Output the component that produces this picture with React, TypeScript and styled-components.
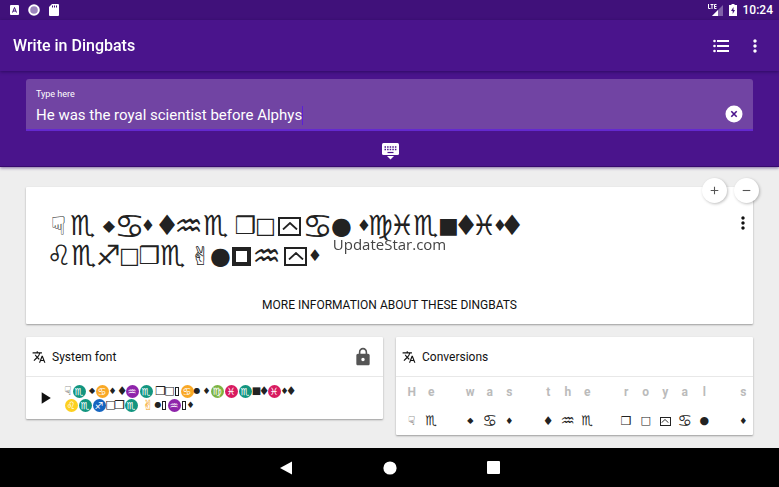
import React, { useState } from 'react';
import styled, { createGlobalStyle } from 'styled-components';
import {
  MdAdd,
  MdLock,
  MdMoreVert,
  MdPlayArrow,
  MdRemove,
  MdTranslate,
} from 'react-icons/md';

const GlobalStyle = createGlobalStyle`
  * { box-sizing: border-box; }
  body { margin: 0; background: #eeeeee; font-family: Roboto, sans-serif; color: #111; }
  button { border: 0; padding: 0; background: none; color: inherit; font: inherit; cursor: pointer; }
`;

const Screen = styled.div`
  display: flex;
  flex-direction: column;
  min-height: 100vh;
`;

const StatusBar = styled.div`
  display: flex;
  align-items: center;
  justify-content: space-between;
  height: 20px;
  padding: 0 6px 0 9px;
  background: #40117a;
  color: #fff;
`;

const StatusGroup = styled.div<{ $gap: number }>`
  display: flex;
  align-items: center;
  gap: ${(p) => p.$gap}px;
  font-size: 12px;
  font-weight: 500;
`;

const AppBar = styled.header`
  position: relative;
  z-index: 1;
  display: flex;
  align-items: center;
  justify-content: space-between;
  height: 51px;
  padding: 0 12px 0 13px;
  background: #4a148c;
  color: #fff;
  box-shadow: 0 1px 3px rgba(20, 0, 60, 0.5);
`;

const Title = styled.h1`
  margin: 0;
  font-size: 16px;
  font-weight: 500;
`;

const Actions = styled.div`
  display: flex;
  align-items: center;
  gap: 10px;
`;

const IconButton = styled.button`
  display: flex;
  align-items: center;
  justify-content: center;
  min-width: 24px;
  height: 24px;
`;

const Compose = styled.section`
  position: relative;
  height: 96px;
  padding: 8px 26px 0;
  background: #4a148c;
  border-bottom: 1px solid #37096e;
  box-shadow: 0 1px 3px rgba(60, 20, 110, 0.6);
`;

const Field = styled.div`
  display: flex;
  justify-content: space-between;
  height: 52px;
  padding: 9px 10px 0;
  border-bottom: 2px solid #6429cf;
  border-radius: 3px 3px 0 0;
  background: #7144a3;
  color: #fff;
`;

const FieldLabel = styled.label`
  display: block;
  font-size: 9px;
  line-height: 13px;
`;

const Entry = styled.div`
  display: flex;
  align-items: center;
  height: 28px;
`;

const TextInput = styled.input`
  field-sizing: content;
  padding: 0;
  border: 0;
  outline: 0;
  background: transparent;
  color: #fff;
  font: 400 15px/20px Roboto, sans-serif;
`;

const Caret = styled.span`
  width: 1px;
  height: 19px;
  background: #5b20d6;
`;

const ClearButton = styled(IconButton)`
  min-width: 18px;
  margin-top: 14px;
`;

const KeyboardRow = styled.div`
  display: flex;
  justify-content: center;
  padding-top: 8px;
  color: #fff;
`;

const Content = styled.main`
  flex: 1;
  padding: 20px 26px 12px;
`;

const Card = styled.section`
  position: relative;
  background: #fff;
  border-radius: 1px;
  box-shadow: 0 1px 2px rgba(0, 0, 0, 0.35);
`;

const MainCard = styled(Card)`
  display: flex;
  flex-direction: column;
  height: 137px;
  padding: 24px 21px 9px;
`;

const SizeButtons = styled.div`
  position: absolute;
  top: -9px;
  right: -6px;
  display: flex;
  gap: 7px;
`;

const RoundButton = styled.button`
  display: flex;
  align-items: center;
  justify-content: center;
  width: 25px;
  height: 25px;
  border-radius: 50%;
  background: #fff;
  color: #555;
  box-shadow: 1px 1px 3px rgba(0, 0, 0, 0.25);
`;

const CardMenu = styled(IconButton)`
  position: absolute;
  top: 24px;
  right: -2px;
`;

const GlyphLine = styled.div<{ $height: number }>`
  display: flex;
  align-items: center;
  height: ${(p) => p.$height}px;
`;

const Glyph = styled.span<{ $width: number; $size: number }>`
  display: flex;
  align-items: center;
  justify-content: center;
  flex: none;
  width: ${(p) => p.$width}px;
  height: 30px;
  font-family: 'DejaVu Sans', sans-serif;
  font-size: ${(p) => p.$size}px;
  line-height: 30px;
  color: #222;
  white-space: pre;
`;

const Quad = styled.span<{ $width: number; $height: number; $border: number }>`
  display: flex;
  align-items: center;
  justify-content: center;
  width: ${(p) => p.$width}px;
  height: ${(p) => p.$height}px;
  border: ${(p) => p.$border}px solid #222;
`;

const MoreInfo = styled.button`
  align-self: center;
  margin-top: auto;
  font-size: 12px;
  font-weight: 400;
  line-height: 20px;
`;

const Columns = styled.div`
  display: grid;
  grid-template-columns: 1fr 1fr;
  align-items: start;
  gap: 13px;
  margin-top: 13px;
`;

const CardHeader = styled.div`
  display: flex;
  align-items: center;
  gap: 6px;
  height: 40px;
  padding: 0 10px 0 6px;
  border-bottom: 1px solid #e8e8e8;
`;

const CardTitle = styled.h2`
  flex: 1;
  margin: 0;
  font-size: 12px;
  font-weight: 400;
`;

const LockIcon = styled(MdLock)`
  color: #555;
`;

const Preview = styled.div`
  display: flex;
  align-items: center;
  gap: 7px;
  height: 42px;
  padding-left: 7px;
`;

const SmallGlyph = styled.span<{ $width: number; $size: number; $color?: string }>`
  display: flex;
  align-items: center;
  justify-content: center;
  flex: none;
  width: ${(p) => p.$width}px;
  height: 14px;
  font-family: 'DejaVu Sans', sans-serif;
  font-size: ${(p) => p.$size}px;
  font-weight: ${(p) => (p.$color ? 700 : 400)};
  line-height: 14px;
  color: ${(p) => p.$color || '#222'};
  white-space: pre;
`;

const Sign = styled.span<{ $color: string }>`
  display: flex;
  align-items: center;
  justify-content: center;
  width: 13px;
  height: 13px;
  border-radius: 50%;
  background: ${(p) => p.$color};
  color: #fff;
  font-size: 10px;
  line-height: 13px;
`;

const ConversionTable = styled.table`
  width: 100%;
  padding-left: 6px;
  table-layout: fixed;
  border-spacing: 0;
  text-align: center;

  th, td { height: 28px; padding: 0; vertical-align: middle; }
  th { height: 30px; color: #bbb; font-size: 12px; font-weight: 700; }
  td > span { width: auto; }
`;

const NavBar = styled.nav`
  display: flex;
  align-items: center;
  justify-content: center;
  gap: 80px;
  height: 39px;
  background: #000;
  color: #fff;
`;

const Watermark = styled.div`
  position: fixed;
  inset: 0;
  display: flex;
  align-items: center;
  justify-content: center;
  pointer-events: none;
  font-family: 'Open Sans', sans-serif;
  font-size: 15px;
  color: #444;
`;

type Spec = { char: string; width: number; size: number; small: number; mini: number; sign?: string };

const GLYPHS: Record<string, Spec> = {
  ' ': { char: ' ', width: 7, size: 24, small: 3, mini: 9 },
  H: { char: '☟', width: 23, size: 26, small: 8, mini: 12 },
  A: { char: '✌', width: 18, size: 26, small: 14, mini: 14 },
  e: { char: '♏', width: 25, size: 28, small: 14, mini: 13, sign: '#12957f' },
  a: { char: '♋', width: 27, size: 34, small: 14, mini: 16, sign: '#f9a825' },
  h: { char: '♒', width: 29, size: 32, small: 14, mini: 16, sign: '#8e24aa' },
  c: { char: '♍', width: 22, size: 28, small: 14, mini: 13, sign: '#7cb342' },
  i: { char: '♓', width: 22, size: 28, small: 14, mini: 13, sign: '#d81b60' },
  b: { char: '♌', width: 24, size: 28, small: 14, mini: 13, sign: '#fdd020' },
  f: { char: '♐', width: 24, size: 28, small: 14, mini: 13, sign: '#1565c0' },
  w: { char: '◆', width: 14, size: 16, small: 6, mini: 8 },
  s: { char: '♦', width: 10, size: 16, small: 7, mini: 9 },
  t: { char: '♦', width: 14, size: 28, small: 6, mini: 12 },
  r: { char: '❒', width: 21, size: 24, small: 9, mini: 12 },
  o: { char: '□', width: 19, size: 22, small: 9, mini: 11 },
  n: { char: '■', width: 21, size: 22, small: 9, mini: 10 },
  l: { char: '●', width: 21, size: 24, small: 6, mini: 11 },
  y: { char: '', width: 29, size: 24, small: 6, mini: 11 },
  p: { char: '', width: 21, size: 24, small: 6, mini: 11 },
};

const Chevron = ({ width }: { width: number }) => (
  <svg width={width} height={width / 2} viewBox="0 0 16 8" fill="none" stroke="#222" strokeWidth="1.8">
    <path d="M1 7.500 8 1l7 6.500" />
  </svg>
);

function LargeText({ text }: { text: string }) {
  return (
    <GlyphLine $height={30}>
      {[...text].map((letter, i) => {
        const g = GLYPHS[letter];
        return (
          <Glyph key={i} $width={g.width} $size={g.size}>
            {letter === 'y' && <Quad $width={23} $height={19} $border={2}><Chevron width={16} /></Quad>}
            {letter === 'p' && <Quad $width={19} $height={19} $border={4} />}
            {letter !== 'y' && letter !== 'p' && g.char + (g.sign ? '\uFE0E' : '')}
          </Glyph>
        );
      })}
    </GlyphLine>
  );
}

function SystemText({ text }: { text: string }) {
  return (
    <GlyphLine $height={14}>
      {[...text].map((letter, i) => {
        const g = GLYPHS[letter];
        const missing = letter === 'y' || letter === 'p';
        const size = letter === 'l' ? 8 : g.mini;
        return (
          <SmallGlyph key={i} $width={g.small} $size={size} $color={letter === 'A' ? '#f59e0b' : undefined}>
            {g.sign && <Sign $color={g.sign}>{g.char + '\uFE0E'}</Sign>}
            {missing && <Quad $width={4} $height={9} $border={1} />}
            {!g.sign && !missing && g.char}
          </SmallGlyph>
        );
      })}
    </GlyphLine>
  );
}

function Conversions({ text }: { text: string }) {
  const letters = [...text];
  return (
    <ConversionTable aria-label="Conversions">
      <thead>
        <tr>{letters.map((l, i) => <th key={i} scope="col">{l}</th>)}</tr>
      </thead>
      <tbody>
        <tr>
          {letters.map((l, i) => (
            <td key={i}>
              <SmallGlyph $width={18} $size={GLYPHS[l].mini}>
                {l === 'y' ? <Quad $width={11} $height={9} $border={1}><Chevron width={8} /></Quad>
                  : GLYPHS[l].char + (GLYPHS[l].sign ? '\uFE0E' : '')}
              </SmallGlyph>
            </td>
          ))}
        </tr>
      </tbody>
    </ConversionTable>
  );
}

export default function App() {
  const [text, setText] = useState('He was the royal scientist before Alphys');
  return (
    <Screen>
      <GlobalStyle />
      <StatusBar>
        <StatusGroup $gap={9}>
          <svg width="10" height="10" viewBox="0 0 10 10">
            <rect x="1" y="0" width="9" height="10" rx="1" fill="#fff" />
            <path d="M3.500 7.500 5.500 2.500l2 5M4 6h3" fill="none" stroke="#40117a" />
          </svg>
          <svg width="12" height="12" viewBox="0 0 12 12">
            <circle cx="6" cy="6" r="4.800" fill="#9c83bd" stroke="#fff" strokeWidth="2" />
          </svg>
          <svg width="10" height="12" viewBox="0 0 10 12">
            <path d="M3 0h6q1 0 1 1v10q0 1-1 1H1q-1 0-1-1V3z" fill="#fff" />
            <path d="M3.500 1.500v2M5.500 1.500v2M7.500 1.500v2" stroke="#40117a" />
          </svg>
        </StatusGroup>
        <StatusGroup $gap={6}>
          <svg width="15" height="13" viewBox="0 0 15 13">
            <path d="M15 1v11H4z" fill="#7f60a8" />
            <path d="M10 6v6H4z" fill="#fff" />
            <path d="M.5 0v4.500H2.500M2.500.5h3M4 .5V5M8.500.5H6.500v4h2M6.500 2.500h2" fill="none" stroke="#fff" />
          </svg>
          <svg width="8" height="12" viewBox="0 0 8 12">
            <path d="M2.500 0h3v1H8v11H0V1h2.500z" fill="#fff" />
            <path d="M4.500 3 2 7h1.700v3L6 6H4.500z" fill="#40117a" />
          </svg>
          <span>10:24</span>
        </StatusGroup>
      </StatusBar>
      <AppBar>
        <Title>Write in Dingbats</Title>
        <Actions>
          <IconButton aria-label="List">
            <svg width="16" height="14" viewBox="0 0 16 14" fill="#fff">
              <path d="M4 1h12v2H4zM4 6h12v2H4zM4 11h12v2H4z" />
              <circle cx="1.500" cy="2" r="1.300" />
              <circle cx="1.500" cy="7" r="1.300" />
              <circle cx="1.500" cy="12" r="1.300" />
            </svg>
          </IconButton>
          <IconButton aria-label="More options"><MdMoreVert size={20} /></IconButton>
        </Actions>
      </AppBar>
      <Compose>
        <Field>
          <div>
            <FieldLabel htmlFor="source">Type here</FieldLabel>
            <Entry>
              <TextInput id="source" value={text} onChange={(e) => setText(e.target.value)} />
              <Caret />
            </Entry>
          </div>
          <ClearButton aria-label="Clear text" onClick={() => setText('')}>
            <svg width="18" height="18" viewBox="0 0 18 18">
              <circle cx="9" cy="9" r="8.500" fill="#fff" />
              <path d="m6.300 6.300 5.400 5.400m0-5.400-5.400 5.400" stroke="#4a148c" strokeWidth="1.600" />
            </svg>
          </ClearButton>
        </Field>
        <KeyboardRow>
          <IconButton aria-label="Hide keyboard">
            <svg width="18" height="18" viewBox="0 0 18 18">
              <rect x="1" y="1" width="17" height="12" rx="1.500" fill="#fff" />
              <path d="M6 14h7l-3.500 3.500z" fill="#fff" />
              <path d="M3.500 5h12M3.500 7.500h12" stroke="#4a148c" strokeWidth="1.300" strokeDasharray="1.500 1.100" />
              <path d="M6.500 10.500h6" stroke="#4a148c" strokeWidth="1.200" />
            </svg>
          </IconButton>
        </KeyboardRow>
      </Compose>
      <Content>
        <MainCard>
          <LargeText text="He was the royal scientist" />
          <LargeText text="before Alphys" />
          <CardMenu aria-label="Card options"><MdMoreVert size={20} /></CardMenu>
          <SizeButtons>
            <RoundButton aria-label="Larger"><MdAdd size={13} /></RoundButton>
            <RoundButton aria-label="Smaller"><MdRemove size={13} /></RoundButton>
          </SizeButtons>
          <MoreInfo>MORE INFORMATION ABOUT THESE DINGBATS</MoreInfo>
        </MainCard>
        <Columns>
          <Card>
            <CardHeader>
              <MdTranslate size={14} />
              <CardTitle>System font</CardTitle>
              <LockIcon size={20} />
            </CardHeader>
            <Preview>
              <IconButton aria-label="Play"><MdPlayArrow size={20} /></IconButton>
              <div>
                <SystemText text="He was the royal scientist" />
                <SystemText text="before Alphys" />
              </div>
            </Preview>
          </Card>
          <Card>
            <CardHeader>
              <MdTranslate size={14} />
              <CardTitle>Conversions</CardTitle>
            </CardHeader>
            <Conversions text="He was the royal s" />
          </Card>
        </Columns>
      </Content>
      <NavBar>
        <IconButton aria-label="Back">
          <svg width="12" height="14" viewBox="0 0 12 14"><path d="M12 .5v13L0 7z" fill="#fff" /></svg>
        </IconButton>
        <IconButton aria-label="Home">
          <svg width="14" height="14" viewBox="0 0 14 14"><circle cx="7" cy="7" r="6.600" fill="#fff" /></svg>
        </IconButton>
        <IconButton aria-label="Recent apps">
          <svg width="13" height="13" viewBox="0 0 13 13"><rect width="13" height="13" rx="1" fill="#fff" /></svg>
        </IconButton>
      </NavBar>
      <Watermark>UpdateStar.com</Watermark>
    </Screen>
  );
}
